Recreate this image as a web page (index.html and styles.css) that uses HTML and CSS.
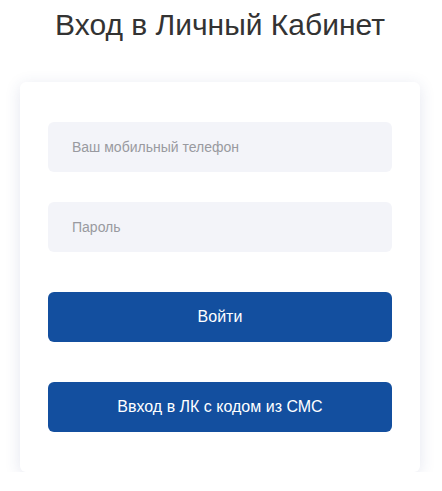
FILE: index.html
```html
<!DOCTYPE html>
<html lang="ru">
<head>
<meta charset="utf-8">
<title>Вход в Личный Кабинет</title>
<link rel="stylesheet" href="styles.css">
</head>
<body>
<main class="page">
  <h1 class="title">Вход в Личный Кабинет</h1>
  <form class="card">
    <div class="fields">
      <input class="field" type="tel" placeholder="Ваш мобильный телефон">
      <input class="field" type="password" placeholder="Пароль">
    </div>
    <button class="btn" type="button">Войти</button>
    <button class="btn" type="button">Ввход в ЛК с кодом из СМС</button>
  </form>
</main>
</body>
</html>
```
FILE: styles.css
```css
html, body {
  margin: 0;
  padding: 0;
  background: #ffffff;
}
body {
  font-family: "Liberation Sans", Arial, sans-serif;
}
.page {
  display: flex;
  flex-direction: column;
  padding: 8px 22px 0 20px;
}
.title {
  margin: 0;
  font-size: 30px;
  font-weight: normal;
  line-height: 34px;
  color: #333333;
  text-align: center;
}
.card {
  margin: 40px 0 0 0;
  width: 400px;
  box-sizing: border-box;
  padding: 40px 28px;
  background: #ffffff;
  border-radius: 6px;
  box-shadow: 0 3px 16px rgba(50, 60, 130, 0.13);
  display: flex;
  flex-direction: column;
  gap: 40px;
}
.fields {
  display: flex;
  flex-direction: column;
  gap: 30px;
}
.field {
  display: block;
  height: 50px;
  box-sizing: border-box;
  border: none;
  outline: none;
  border-radius: 6px;
  background: #f3f4f9;
  padding: 0 24px;
  font-family: inherit;
  font-size: 14px;
  color: #333;
}
.field::placeholder {
  color: #999aa0;
}
.btn {
  display: block;
  height: 50px;
  border: none;
  border-radius: 6px;
  background: #134f9f;
  color: #ffffff;
  font-family: inherit;
  font-size: 16px;
  font-weight: normal;
  cursor: pointer;
}
```
